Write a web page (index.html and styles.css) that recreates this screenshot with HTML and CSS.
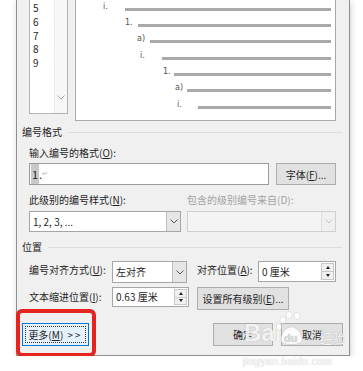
FILE: index.html
```html
<!DOCTYPE html>
<html>
<head>
    <meta name="viewport" content="width=device-width, initial-scale=1.0">
    <link rel="stylesheet" href="styles.css">
</head>
<body>

<div class="dialog">
    <div class="top-row">
        <div class="level-list">
            <div class="level-items">
                <div>5</div>
                <div>6</div>
                <div>7</div>
                <div>8</div>
                <div>9</div>
            </div>
            <div class="level-scroll">
                <svg class="chev" width="8" height="5" viewBox="0 0 8 5"><polyline points="0.5,0.5 4,4 7.5,0.5" fill="none" stroke="#a8a8a8" stroke-width="1"/></svg>
            </div>
        </div>
        <div class="preview">
            <div class="pv-row lv3"><span class="pv-num">i.</span><span class="pv-line"></span></div>
            <div class="pv-row lv4"><span class="pv-num">1.</span><span class="pv-line"></span></div>
            <div class="pv-row lv5"><span class="pv-num">a)</span><span class="pv-line"></span></div>
            <div class="pv-row lv6"><span class="pv-num">i.</span><span class="pv-line"></span></div>
            <div class="pv-row lv7"><span class="pv-num">1.</span><span class="pv-line"></span></div>
            <div class="pv-row lv8"><span class="pv-num">a)</span><span class="pv-line"></span></div>
            <div class="pv-row lv9"><span class="pv-num">i.</span><span class="pv-line"></span></div>
        </div>
    </div>

    <div class="group-title first"><span>编号格式</span><span class="group-line"></span></div>

    <div class="field-label">输入编号的格式(<u>O</u>):</div>
    <div class="field-row input-row">
        <div class="textbox format-box"><span class="sel">1</span>.<span class="para">&#8629;</span></div>
        <button class="btn font-btn">字体(<u>F</u>)...</button>
    </div>

    <div class="field-row label-row">
        <div class="col-style">此级别的编号样式(<u>N</u>):</div>
        <div class="col-from disabled">包含的级别编号来自(D):</div>
    </div>
    <div class="field-row select-row">
        <div class="combo col-style">
            <span class="combo-text">1, 2, 3, ...</span>
            <span class="combo-btn"><svg width="8" height="5" viewBox="0 0 8 5"><polyline points="0.5,0.5 4,4 7.5,0.5" fill="none" stroke="#555" stroke-width="1"/></svg></span>
        </div>
        <div class="combo col-from combo-disabled">
            <span class="combo-text"></span>
            <span class="combo-btn"><svg width="8" height="5" viewBox="0 0 8 5"><polyline points="0.5,0.5 4,4 7.5,0.5" fill="none" stroke="#c4c4c4" stroke-width="1"/></svg></span>
        </div>
    </div>

    <div class="group-title second"><span>位置</span><span class="group-line"></span></div>

    <div class="field-row pos-row pos-row-1">
        <div class="pos-label">编号对齐方式(<u>U</u>):</div>
        <div class="combo align-combo">
            <span class="combo-text">左对齐</span>
            <span class="combo-btn"><svg width="8" height="5" viewBox="0 0 8 5"><polyline points="0.5,0.5 4,4 7.5,0.5" fill="none" stroke="#555" stroke-width="1"/></svg></span>
        </div>
        <div class="pos-label2">对齐位置(<u>A</u>):</div>
        <div class="spinner align-at">
            <span class="spin-text">0 厘米</span>
            <span class="spin-btns"><span class="spin-up"></span><span class="spin-down"></span></span>
        </div>
    </div>

    <div class="field-row pos-row pos-row-2">
        <div class="pos-label tall">文本缩进位置(<u>I</u>):</div>
        <div class="spinner indent-at">
            <span class="spin-text">0.63 厘米</span>
            <span class="spin-btns"><span class="spin-up"></span><span class="spin-down"></span></span>
        </div>
        <button class="btn all-btn">设置所有级别(<u>E</u>)...</button>
    </div>

    <div class="button-row">
        <button class="btn more-btn"><span class="focus-ring">更多(<u>M</u>) <span class="arrows">&gt;&gt;</span></span></button>
        <span class="spacer"></span>
        <button class="btn ok-btn">确定</button>
        <button class="btn cancel-btn">取消</button>
    </div>

    <div class="highlight"></div>
</div>

<div class="watermark">
    <span class="wm-bai">Bai</span>
    <svg class="wm-paw" width="30" height="38" viewBox="0 0 30 38">
        <ellipse cx="8" cy="10" rx="3" ry="3.6"/>
        <ellipse cx="14" cy="5" rx="3" ry="3.6"/>
        <ellipse cx="22" cy="6" rx="3" ry="3.6"/>
        <ellipse cx="4" cy="17" rx="2.6" ry="3.2"/>
        <path d="M6 30 C6 22 12 17 16 17 C21 17 27 22 27 30 C27 36 6 36 6 30 Z"/>
        <text x="9" y="32">du</text>
    </svg>
    <span class="wm-jy">经验</span>
</div>
<div class="wm-url">jingyan.baidu.com</div>

</body>
</html>
```

FILE: styles.css
```css
body {
    margin: 0;
    background-color: #fff;
    font-family: "Noto Sans CJK SC", sans-serif;
    font-size: 10px;
    color: #1e1e1e;
    overflow: hidden;
}

.dialog {
    position: relative;
    width: 334px;
    margin-left: 16px;
    box-sizing: border-box;
    padding: 0 6px 9px 5px;
    background-color: #f0f0f0;
    border: 1px solid #8f8f8f;
    border-top: none;
    box-shadow: 1px 2px 6px rgba(0, 0, 0, 0.18);
}

/* top: level list + preview */
.top-row {
    display: flex;
    align-items: flex-start;
    gap: 7px;
    margin: 0 7px;
}

.level-list {
    display: flex;
    width: 39px;
    height: 114px;
    box-sizing: border-box;
    background-color: #fff;
    border: 1px solid #b4b4b4;
    border-top: none;
}

.level-items {
    flex: 1;
    padding: 1px 0 0 3px;
}

.level-items div {
    height: 13.75px;
    line-height: 13.75px;
    font-size: 10px;
}

.level-scroll {
    display: flex;
    flex-direction: column;
    justify-content: flex-end;
    align-items: center;
    width: 12px;
    background-color: #f7f7f7;
    border-left: 1px solid #ececec;
}

.chev {
    margin-bottom: 13px;
}

.preview {
    flex: 1;
    height: 121px;
    box-sizing: border-box;
    padding: 1px 4px 0 0;
    background-color: #fff;
    border: 1px solid #a9a9a9;
    border-top: none;
}

.pv-row {
    display: flex;
    align-items: center;
    height: 16.33px;
}

.pv-num {
    box-sizing: border-box;
    margin-left: var(--num);
    width: calc(var(--text) - var(--num));
    margin-bottom: 6px;
    font-family: "DejaVu Sans", sans-serif;
    font-size: 8px;
    line-height: 9px;
    color: #505050;
}

.pv-line {
    flex: 1;
    height: 3px;
    background-color: #a9a9a9;
}

.lv3 { --num: 27px; --text: 49px; }
.lv4 { --num: 49px; --text: 62px; }
.lv5 { --num: 61px; --text: 74px; }
.lv6 { --num: 64px; --text: 86px; }
.lv7 { --num: 87px; --text: 98px; }
.lv8 { --num: 99px; --text: 111px; }
.lv9 { --num: 101px; --text: 122px; }

/* group headings */
.group-title {
    display: flex;
    align-items: center;
    height: 14px;
    line-height: 14px;
}

.group-title.first {
    margin-top: 4px;
}

.group-title.second {
    margin-top: 8px;
}

.group-line {
    flex: 1;
    height: 1px;
    margin: 1px 1px 0 6px;
    background-color: #dcdcdc;
}

.field-label {
    margin: 7px 7px 0;
    line-height: 14px;
}

.field-row {
    display: flex;
    margin: 0 7px;
}

.input-row {
    margin-top: 3px;
    gap: 7px;
}

.label-row {
    margin-top: 8px;
    gap: 6px;
    line-height: 14px;
}

.select-row {
    margin-top: 4px;
    gap: 6px;
}

.disabled {
    color: #a2a2a2;
}

.col-style {
    width: 152px;
}

.col-from {
    width: 149px;
}

/* text box */
.textbox {
    box-sizing: border-box;
    height: 22px;
    line-height: 20px;
    padding-left: 1px;
    background-color: #fff;
    border: 1px solid #9c9c9c;
}

.format-box {
    width: 240px;
    font-size: 11px;
}

.sel {
    display: inline-block;
    padding: 0 1px;
    background-color: #c9c9c9;
}

.para {
    position: relative;
    top: -3px;
    font-size: 7px;
    color: #b3b3b3;
}

/* buttons */
.btn {
    box-sizing: border-box;
    height: 23px;
    padding: 0;
    font-family: "Noto Sans CJK SC", sans-serif;
    font-size: 10px;
    color: #1e1e1e;
    background-color: #e1e1e1;
    border: 1px solid #adadad;
}

.font-btn {
    width: 60px;
    height: 22px;
}

/* combo boxes */
.combo {
    display: flex;
    box-sizing: border-box;
    height: 21px;
    background-color: #fff;
    border: 1px solid #a6a6a6;
}

.combo-text {
    flex: 1;
    padding-left: 3px;
    line-height: 19px;
}

.combo-btn {
    display: flex;
    align-items: center;
    justify-content: center;
    width: 13px;
    background-color: #e6e6e6;
    border-left: 1px solid #bdbdbd;
}

.combo-disabled {
    background-color: #f4f4f4;
    border-color: #cfcfcf;
}

.combo-disabled .combo-btn {
    background-color: #f0f0f0;
    border-left-color: #dcdcdc;
}

/* position rows */
.pos-row-1 {
    margin-top: 7px;
    align-items: flex-start;
}

.pos-row-2 {
    margin-top: 4px;
    align-items: flex-start;
}

.pos-label {
    width: 83px;
    line-height: 18px;
}

.pos-label.tall {
    line-height: 20px;
}

.align-combo {
    width: 75px;
    height: 22px;
    margin-right: 10px;
}

.align-combo .combo-text {
    line-height: 20px;
}

.pos-label2 {
    width: 61px;
    line-height: 18px;
}

.spinner {
    display: flex;
    box-sizing: border-box;
    height: 21px;
    background-color: #fff;
    border: 1px solid #a6a6a6;
}

.align-at {
    width: 78px;
}

.indent-at {
    width: 77px;
    height: 20px;
    margin-right: 8px;
}

.spin-text {
    flex: 1;
    padding-left: 3px;
    line-height: 19px;
}

.indent-at .spin-text {
    line-height: 18px;
}

.spin-btns {
    display: flex;
    flex-direction: column;
    width: 11px;
    margin: 1px 1px 1px 0;
    border: 1px solid #c8c8c8;
    background-color: #f0f0f0;
}

.spin-up,
.spin-down {
    flex: 1;
    display: flex;
    align-items: center;
    justify-content: center;
}

.spin-up {
    border-bottom: 1px solid #c8c8c8;
}

.spin-up::after {
    content: "";
    border-left: 2.5px solid transparent;
    border-right: 2.5px solid transparent;
    border-bottom: 3px solid #222;
}

.spin-down::after {
    content: "";
    border-left: 2.5px solid transparent;
    border-right: 2.5px solid transparent;
    border-top: 3px solid #222;
}

.all-btn {
    width: 92px;
}

/* bottom buttons */
.button-row {
    display: flex;
    margin-top: 13px;
}

.spacer {
    flex: 1;
}

.more-btn {
    width: 67px;
    padding: 2px;
    background-color: #e5f1fb;
    border-color: #0078d7;
}

.focus-ring {
    display: block;
    height: 100%;
    box-sizing: border-box;
    line-height: 15px;
    border: 1px dotted #333;
}

.arrows {
    margin-left: 2px;
    letter-spacing: 2px;
}

.ok-btn {
    width: 60px;
    margin-right: 8px;
}

.cancel-btn {
    width: 62px;
}

/* red annotation frame */
.highlight {
    position: absolute;
    left: -1px;
    top: 309px;
    width: 80px;
    height: 48px;
    box-sizing: border-box;
    border: 4px solid #e5231f;
    border-radius: 6px;
}

/* baidu watermark */
.watermark {
    position: absolute;
    left: 244px;
    top: 310px;
    display: flex;
    align-items: flex-end;
    height: 38px;
    color: rgba(255, 255, 255, 0.9);
    text-shadow: 0 0 1px rgba(0, 0, 0, 0.3);
}

.wm-bai {
    font-family: "Liberation Sans", sans-serif;
    font-size: 24px;
    font-weight: bold;
    line-height: 26px;
    margin-bottom: 2px;
}

.wm-paw {
    margin-left: -6px;
    fill: rgba(255, 255, 255, 0.9);
    stroke: rgba(0, 0, 0, 0.15);
    stroke-width: 0.6;
}

.wm-paw text {
    font-family: "Liberation Sans", sans-serif;
    font-size: 11px;
    font-weight: bold;
    fill: #dcdcdc;
    stroke: none;
}

.wm-jy {
    margin-left: 14px;
    margin-bottom: 2px;
    font-size: 13px;
    line-height: 16px;
}

.wm-url {
    position: absolute;
    left: 243px;
    top: 356px;
    font-family: "Liberation Sans", sans-serif;
    font-size: 10px;
    letter-spacing: 0.5px;
    color: #fff;
    text-shadow: 0 0 1px rgba(0, 0, 0, 0.35);
}
```
